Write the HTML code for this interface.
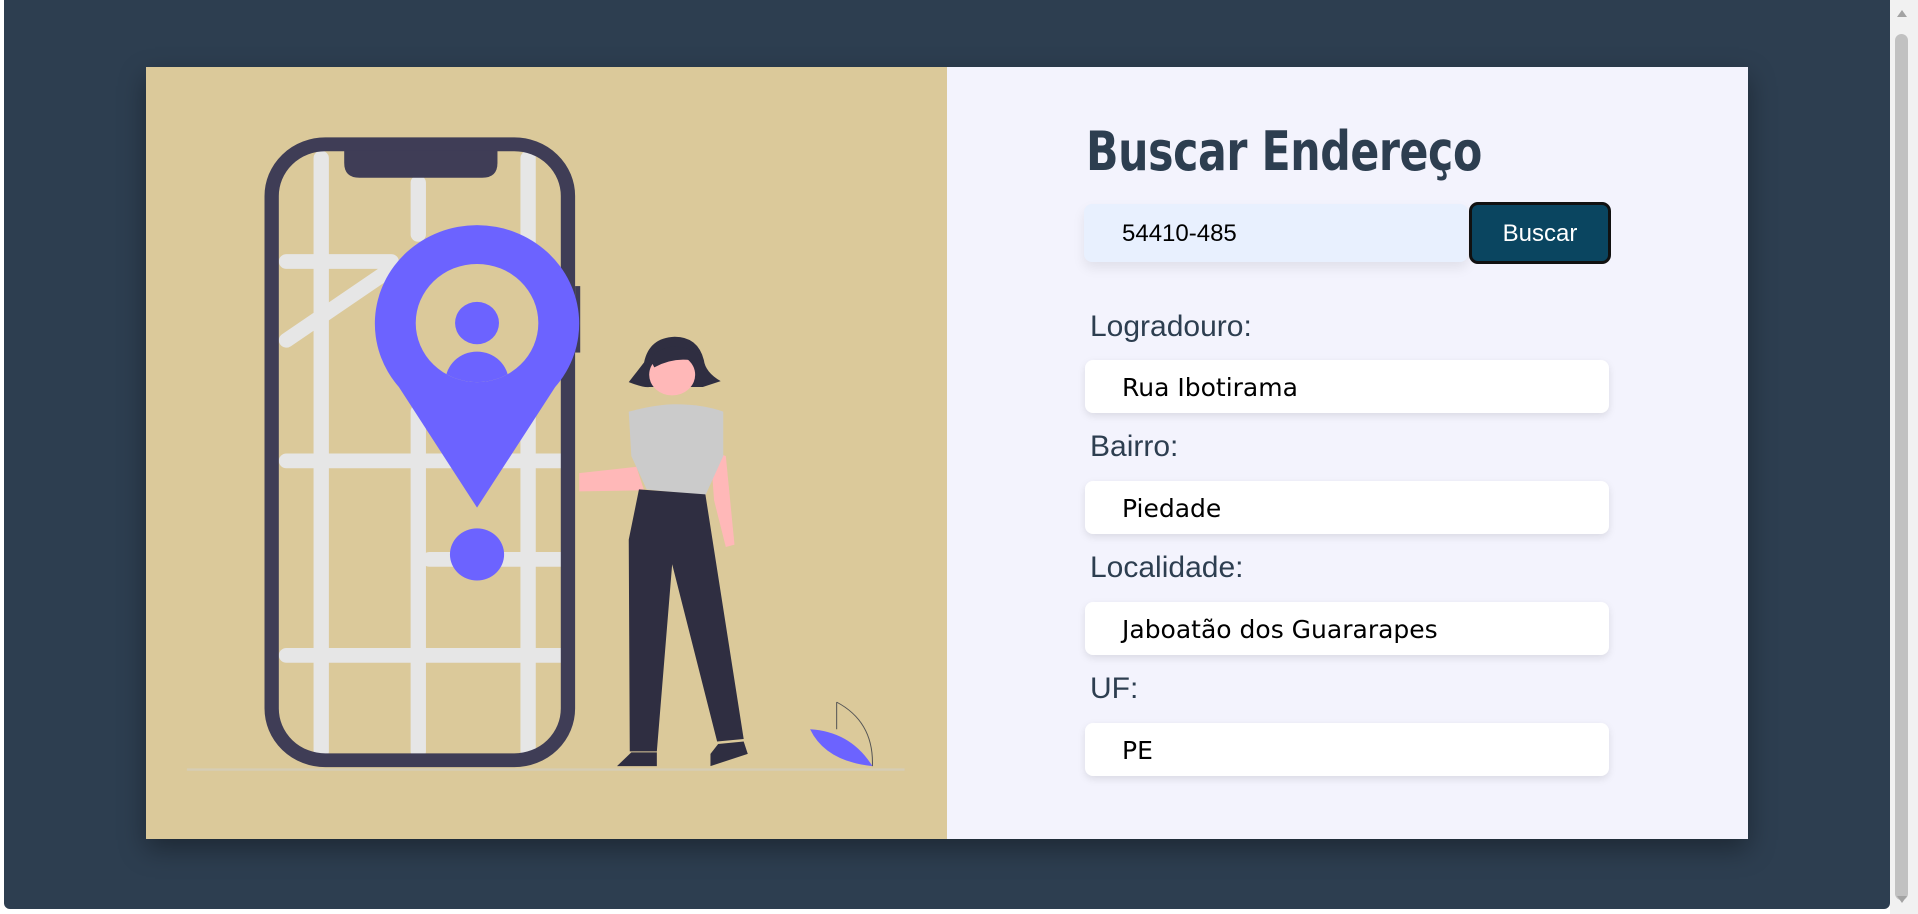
<!DOCTYPE html>
<html><head><meta charset="utf-8"><style>
html,body{margin:0;padding:0;width:1918px;height:914px;overflow:hidden;background:#fff;}
.bg{position:absolute;left:4px;top:0;width:1886px;height:909px;background:#2d3e50;border-radius:0 0 6px 6px;}
.sb{position:absolute;left:1890px;top:0;width:28px;height:914px;background:#f1f1f1;}
.thumb{position:absolute;left:1895px;top:34px;width:13px;height:866px;background:#c1c1c1;border-radius:7px;}
.card{position:absolute;left:146px;top:67px;width:1602px;height:772px;background:#f3f3fd;box-shadow:0 10px 25px rgba(0,0,0,.35);}
.left{position:absolute;left:0;top:0;width:801px;height:772px;background:#dbc99a;}
h1{position:absolute;left:1086px;top:120px;margin:0;font:bold 54px "DejaVu Sans",sans-serif;color:#2d3e50;transform:scaleX(.79);transform-origin:0 0;white-space:nowrap;letter-spacing:-0.5px}
.inp{position:absolute;left:1084px;top:204px;width:384px;height:58px;background:#e8f0fe;border-radius:8px;box-shadow:0 6px 12px rgba(0,0,0,.08);font:24px "Liberation Sans",sans-serif;line-height:60px;color:#000;box-sizing:border-box;padding-left:38px;}
.btn{position:absolute;left:1469px;top:202px;width:142px;height:62px;box-sizing:border-box;background:#0a4560;border:3px solid #111;border-radius:9px;color:#fff;font:24px "Liberation Sans",sans-serif;text-align:center;line-height:58px;}
.lbl{position:absolute;left:1090px;font:30px "Liberation Sans",sans-serif;color:#2d3e50;}
.box{position:absolute;left:1085px;width:524px;height:53px;background:#fff;border-radius:8px;box-shadow:0 3px 8px rgba(0,0,0,.1);font:25px "DejaVu Sans",sans-serif;line-height:56px;box-sizing:border-box;padding-left:37px;color:#000;}
</style></head><body>
<div class="bg"></div>
<div class="sb"></div><div class="thumb"></div>
<div style="position:absolute;left:1897px;top:10px;width:0;height:0;border-left:5px solid transparent;border-right:5px solid transparent;border-bottom:7px solid #a3a3a3"></div>
<div style="position:absolute;left:1897px;top:896px;width:0;height:0;border-left:5px solid transparent;border-right:5px solid transparent;border-top:7px solid #a3a3a3"></div>
<div class="card">
<div class="left">
<svg width="801" height="772" viewBox="0 0 1568 1568" preserveAspectRatio="none">
<line x1="80" y1="1427" x2="1485" y2="1427" stroke="#d6cdb5" stroke-width="5"/>
<g stroke="#e6e6e6" stroke-width="30" stroke-linecap="round" fill="none">
<line x1="343" y1="185" x2="343" y2="1390"/>
<line x1="533" y1="235" x2="533" y2="340"/>
<line x1="533" y1="700" x2="533" y2="1390"/>
<line x1="748" y1="185" x2="748" y2="1390"/>
<line x1="275" y1="395" x2="480" y2="395"/>
<line x1="275" y1="800" x2="815" y2="800"/>
<line x1="555" y1="1000" x2="815" y2="1000"/>
<line x1="275" y1="1195" x2="815" y2="1195"/>
<line x1="275" y1="555" x2="480" y2="410"/>
</g>
<rect x="246" y="157" width="580" height="1251" rx="105" fill="none" stroke="#3f3d56" stroke-width="28"/>
<path d="M388 170 H688 V195 Q688 225 658 225 H418 Q388 225 388 195 Z" fill="#3f3d56"/>
<rect x="840" y="445" width="10" height="135" fill="#3f3d56"/>
<path d="M648 895 L495 650 A200 200 0 1 1 801 650 Z" fill="#6c63ff"/>
<circle cx="648" cy="520" r="120" fill="#dbc99a"/>
<clipPath id="c"><circle cx="648" cy="520" r="120"/></clipPath>
<circle cx="648" cy="520" r="43" fill="#6c63ff"/>
<circle cx="648" cy="640" r="62" fill="#6c63ff" clip-path="url(#c)"/>
<circle cx="648" cy="990" r="53" fill="#6c63ff"/>
<path d="M848 825 L960 812 L975 860 L848 862 Z" fill="#ffb8b8"/>
<path d="M1105 780 L1135 790 L1152 970 L1135 975 L1112 880 Z" fill="#ffb8b8"/>
<path d="M945 700 Q1000 685 1035 685 Q1090 685 1130 700 L1130 790 L1095 870 L980 858 L950 790 Z" fill="#cbcbcb"/>
<path d="M965 858 L1095 868 L1170 1365 L1118 1370 L1030 1010 L1000 1390 L947 1390 L945 960 Z" fill="#2f2e41"/>
<path d="M950 1392 L1000 1392 L1000 1420 L922 1420 Z" fill="#2f2e41"/>
<path d="M1120 1375 L1170 1370 L1178 1395 L1105 1420 L1105 1395 Z" fill="#2f2e41"/>
<path d="M1035 548 Q985 550 975 600 L945 640 Q975 652 985 650 L1090 650 L1125 638 Q1095 620 1092 595 Q1080 548 1035 548 Z" fill="#2f2e41"/>
<ellipse cx="1030" cy="625" rx="45" ry="42" fill="#ffb8b8"/>
<path d="M985 590 Q1040 545 1085 590 L1085 600 Q1040 585 995 610 Z" fill="#2f2e41"/>
<path d="M1300 1345 Q1380 1350 1422 1420 Q1330 1410 1300 1345 Z" fill="#6c63ff"/>
<path d="M1352 1290 Q1425 1330 1422 1420 M1352 1290 L1352 1345" stroke="#555" stroke-width="2" fill="none"/>
</svg>
</div>
</div>
<h1>Buscar Endereço</h1>
<div class="inp">54410-485</div>
<div class="btn">Buscar</div>
<div class="lbl" style="top:310px">Logradouro:</div>
<div class="box" style="top:360px">Rua Ibotirama</div>
<div class="lbl" style="top:430px">Bairro:</div>
<div class="box" style="top:481px">Piedade</div>
<div class="lbl" style="top:551px">Localidade:</div>
<div class="box" style="top:602px">Jaboatão dos Guararapes</div>
<div class="lbl" style="top:672px">UF:</div>
<div class="box" style="top:723px">PE</div>
</body></html>
